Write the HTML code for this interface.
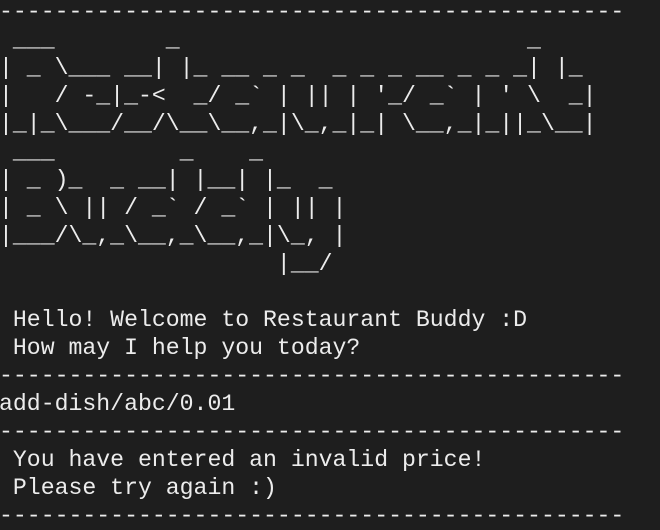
<!DOCTYPE html>
<html><head><meta charset="utf-8"><style>
html,body{margin:0;padding:0;background:#1e1e1e;width:660px;height:522px;overflow:hidden}
pre{position:absolute;left:-1px;top:-2px;margin:0;font-family:"Liberation Mono",monospace;font-size:23.17px;line-height:28px;color:#ececec;white-space:pre}
</style></head><body><pre>---------------------------------------------
 ___        _                         _
| _ \___ __| |_ __ _ _  _ _ _ __ _ _ _| |_
|   / -_|_-&lt;  _/ _` | || | '_/ _` | ' \  _|
|_|_\___/__/\__\__,_|\_,_|_| \__,_|_||_\__|
 ___         _    _
| _ )_  _ __| |__| |_  _
| _ \ || / _` / _` | || |
|___/\_,_\__,_\__,_|\_, |
                    |__/

 Hello! Welcome to Restaurant Buddy :D
 How may I help you today?
---------------------------------------------
add-dish/abc/0.01
---------------------------------------------
 You have entered an invalid price!
 Please try again :)
---------------------------------------------
</pre></body></html>
